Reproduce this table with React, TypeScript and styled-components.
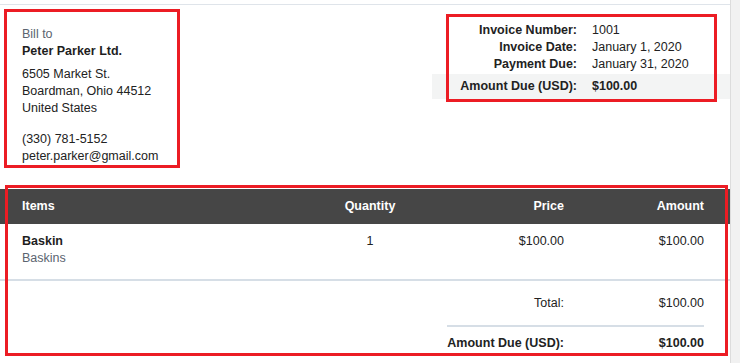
import React from "react";
import styled, { createGlobalStyle } from "styled-components";

const GlobalStyle = createGlobalStyle`
  html, body {
    margin: 0;
    padding: 0;
    background: #ffffff;
  }
  body {
    font-family: "Liberation Sans", Arial, Helvetica, sans-serif;
    font-size: 12.5px;
    color: #222222;
  }
  * { box-sizing: border-box; }
`;

const Page = styled.div`
  position: relative;
  display: flex;
  height: 363px;
  overflow: hidden;
`;

const Sheet = styled.div`
  width: 730px;
  padding-top: 4px;
  flex-shrink: 0;
`;

const Gutter = styled.div`
  flex: 1;
  background: #f1f1f1;
  border-left: 1px solid #dcdcdc;
`;

const Card = styled.div`
  border-top: 1px solid #dfe4ea;
  background: #ffffff;
`;

const TopSection = styled.div`
  display: flex;
  justify-content: space-between;
  align-items: flex-start;
  padding-top: 17px;
`;

const BillTo = styled.div`
  padding: 3.5px 0 24.5px 22px;
  line-height: 17px;
`;

const BillLabel = styled.div`
  color: #5b6470;
`;

const BillName = styled.div`
  font-weight: bold;
  color: #1e1e1e;
`;

const Block = styled.div<{ $gap: number }>`
  margin-top: ${(p) => p.$gap}px;
`;

const Meta = styled.div`
  width: 298px;
`;

const MetaRow = styled.div<{ $highlight?: boolean }>`
  display: grid;
  grid-template-columns: 145px 138px;
  column-gap: 15px;
  line-height: ${(p) => (p.$highlight ? "25px" : "17px")};
  margin-top: ${(p) => (p.$highlight ? "1px" : "0")};
  background: ${(p) => (p.$highlight ? "#f3f4f4" : "transparent")};
  font-weight: ${(p) => (p.$highlight ? "bold" : "normal")};
`;

const MetaLabel = styled.div`
  text-align: right;
  font-weight: bold;
`;

const MetaValue = styled.div``;

const gridCols = "1fr 100px 144px 140px";

const TableHead = styled.div`
  display: grid;
  grid-template-columns: ${gridCols};
  padding: 0 26px 0 22px;
  height: 35px;
  line-height: 35px;
  background: #464646;
  color: #ffffff;
  font-weight: bold;
`;

const Cell = styled.div<{ $align?: "left" | "center" | "right" }>`
  text-align: ${(p) => p.$align || "left"};
`;

const ItemRow = styled.div`
  display: grid;
  grid-template-columns: ${gridCols};
  padding: 8.5px 26px 12.5px 22px;
  line-height: 17px;
  border-bottom: 2px solid #d6dee6;
`;

const ItemName = styled.div`
  font-weight: bold;
  color: #1e1e1e;
`;

const ItemDesc = styled.div`
  color: #5b6470;
`;

const Totals = styled.div`
  display: flex;
  justify-content: flex-end;
  padding: 13.8px 26px 0 0;
`;

const TotalsGrid = styled.div`
  display: grid;
  grid-template-columns: auto 140px;
  line-height: 17px;
`;

const TotalLabel = styled.div<{ $strong?: boolean }>`
  text-align: right;
  font-weight: ${(p) => (p.$strong ? "bold" : "normal")};
`;

const TotalValue = styled.div<{ $strong?: boolean }>`
  text-align: right;
  font-weight: ${(p) => (p.$strong ? "bold" : "normal")};
`;

const Divider = styled.div`
  grid-column: 1 / -1;
  height: 2px;
  background: #d6dee6;
  margin: 13px 0 8px;
`;

const Annotation = styled.div`
  position: absolute;
  border: 3px solid #ec1c24;
  pointer-events: none;
`;

const annotations = [
  { left: 4, top: 9, width: 176, height: 159 },
  { left: 446, top: 14, width: 271, height: 88 },
  { left: 5, top: 185, width: 723, height: 171 },
];

export default function App() {
  return (
    <>
      <GlobalStyle />
      <Page>
        <Sheet>
          <Card>
            <TopSection>
              <BillTo>
                <BillLabel>Bill to</BillLabel>
                <BillName>Peter Parker Ltd.</BillName>
                <Block $gap={6}>
                  <div>6505 Market St.</div>
                  <div>Boardman, Ohio 44512</div>
                  <div>United States</div>
                </Block>
                <Block $gap={14}>
                  <div>(330) 781-5152</div>
                  <div>peter.parker@gmail.com</div>
                </Block>
              </BillTo>
              <Meta>
                <MetaRow>
                  <MetaLabel>Invoice Number:</MetaLabel>
                  <MetaValue>1001</MetaValue>
                </MetaRow>
                <MetaRow>
                  <MetaLabel>Invoice Date:</MetaLabel>
                  <MetaValue>January 1, 2020</MetaValue>
                </MetaRow>
                <MetaRow>
                  <MetaLabel>Payment Due:</MetaLabel>
                  <MetaValue>January 31, 2020</MetaValue>
                </MetaRow>
                <MetaRow $highlight>
                  <MetaLabel>Amount Due (USD):</MetaLabel>
                  <MetaValue>$100.00</MetaValue>
                </MetaRow>
              </Meta>
            </TopSection>

            <TableHead>
              <Cell>Items</Cell>
              <Cell $align="center">Quantity</Cell>
              <Cell $align="right">Price</Cell>
              <Cell $align="right">Amount</Cell>
            </TableHead>
            <ItemRow>
              <Cell>
                <ItemName>Baskin</ItemName>
                <ItemDesc>Baskins</ItemDesc>
              </Cell>
              <Cell $align="center">1</Cell>
              <Cell $align="right">$100.00</Cell>
              <Cell $align="right">$100.00</Cell>
            </ItemRow>
            <Totals>
              <TotalsGrid>
                <TotalLabel>Total:</TotalLabel>
                <TotalValue>$100.00</TotalValue>
                <Divider />
                <TotalLabel $strong>Amount Due (USD):</TotalLabel>
                <TotalValue $strong>$100.00</TotalValue>
              </TotalsGrid>
            </Totals>
          </Card>
        </Sheet>
        <Gutter />
        {annotations.map((a, i) => (
          <Annotation
            key={i}
            style={{ left: a.left, top: a.top, width: a.width, height: a.height }}
          />
        ))}
      </Page>
    </>
  );
}
